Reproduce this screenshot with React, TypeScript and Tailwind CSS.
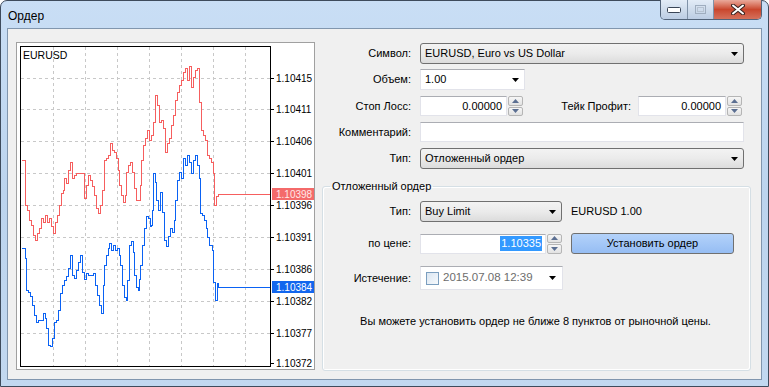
import React from 'react'

const red: [number, number][] = [
  [21, 160], [24, 160], [25, 205], [27, 210], [29, 220], [31, 225], [33, 235], [35, 240], [37, 233], [39, 228],
  [41, 218], [43, 222], [45, 215], [47, 222], [49, 218], [51, 226], [53, 233], [55, 222], [57, 215], [59, 205],
  [61, 193], [63, 190], [64, 178], [66, 183], [68, 170], [70, 162], [72, 178], [74, 175], [76, 173], [82, 173],
  [84, 198], [86, 185], [88, 175], [90, 180], [92, 186], [94, 195], [96, 208], [98, 213], [100, 205], [102, 190],
  [104, 160], [106, 158], [108, 155], [110, 143], [112, 150], [114, 152], [116, 158], [118, 170], [119, 185],
  [121, 195], [123, 202], [125, 195], [126, 172], [128, 165], [130, 162], [132, 172], [134, 188], [136, 200],
  [138, 200], [140, 185], [141, 160], [143, 145], [145, 138], [147, 130], [149, 140], [151, 135], [153, 122],
  [155, 95], [157, 105], [159, 122], [161, 120], [163, 128], [165, 152], [167, 143], [169, 138], [171, 125],
  [173, 115], [175, 100], [177, 92], [179, 85], [181, 80], [183, 72], [185, 68], [187, 80], [189, 66], [191, 87],
  [193, 77], [195, 70], [197, 68], [199, 102], [201, 130], [203, 135], [205, 140], [207, 155], [209, 158],
  [211, 162], [213, 173], [214, 205], [216, 196], [218, 194], [270, 194],
]

const blue: [number, number][] = [
  [21, 248], [24, 248], [25, 258], [26, 290], [28, 292], [30, 296], [32, 305], [34, 315], [36, 322], [38, 320],
  [41, 320], [43, 313], [45, 318], [46, 328], [48, 345], [50, 346], [52, 338], [54, 322], [56, 320], [58, 310],
  [60, 293], [62, 285], [64, 280], [66, 276], [68, 268], [70, 255], [72, 275], [74, 278], [76, 270], [78, 262],
  [80, 255], [82, 272], [84, 279], [86, 273], [88, 275], [93, 273], [95, 285], [97, 295], [99, 305], [101, 313],
  [103, 285], [104, 265], [106, 255], [108, 248], [109, 243], [111, 250], [113, 245], [115, 250], [117, 248],
  [119, 255], [120, 265], [122, 285], [124, 297], [126, 300], [127, 280], [129, 245], [131, 241], [133, 252],
  [134, 275], [136, 287], [138, 290], [139, 279], [140, 265], [142, 245], [144, 228], [146, 216], [148, 218],
  [150, 226], [151, 225], [152, 210], [153, 173], [155, 182], [156, 200], [158, 210], [160, 192], [162, 212],
  [164, 240], [166, 246], [168, 236], [170, 228], [172, 232], [174, 220], [175, 200], [177, 180], [179, 172],
  [181, 178], [183, 158], [185, 165], [187, 155], [189, 162], [191, 173], [193, 160], [195, 155], [197, 165],
  [199, 178], [200, 213], [202, 215], [204, 220], [206, 228], [207, 237], [209, 245], [211, 245], [212, 250],
  [213, 282], [215, 300], [217, 283], [218, 287], [270, 287],
]

const stepPath = (pts: [number, number][]) =>
  pts.map(([x, y], i) => (i === 0 ? `M${x + 0.5} ${y + 0.5}` : `H${x + 0.5}V${y + 0.5}`)).join('')

const levels = [
  { y: 78, t: '1.10415' },
  { y: 109, t: '1.10411' },
  { y: 141, t: '1.10406' },
  { y: 173, t: '1.10401' },
  { y: 205, t: '1.10396' },
  { y: 237, t: '1.10391' },
  { y: 269, t: '1.10386' },
  { y: 301, t: '1.10382' },
  { y: 333, t: '1.10377' },
  { y: 363, t: '1.10372' },
]
const vlines = [53, 85, 117, 149, 181, 213, 245]

function Chart() {
  return (
    <div className="w-[299px] h-[328px] border border-[#a0a0a0] bg-white shrink-0">
      <svg width="297" height="326" viewBox="17 43 297 326" className="block font-['Liberation_Sans',Arial,sans-serif]">
        {levels.slice(0, 9).map((l) => (
          <line key={l.y} x1="21" x2="270" y1={l.y + 0.5} y2={l.y + 0.5} stroke="#c8c8c8" strokeDasharray="3 3" />
        ))}
        {vlines.map((x) => (
          <line key={x} x1={x + 0.5} x2={x + 0.5} y1="47" y2="366" stroke="#c8c8c8" strokeDasharray="3 3" />
        ))}
        <path d={stepPath(red)} fill="none" stroke="#f65e5e" strokeWidth="1" shapeRendering="crispEdges" />
        <path d={stepPath(blue)} fill="none" stroke="#0a62f4" strokeWidth="1" shapeRendering="crispEdges" />
        <rect x="20.5" y="46.5" width="250" height="320" fill="none" stroke="#000" shapeRendering="crispEdges" />
        {levels.map((l) => (
          <g key={l.t}>
            <line x1="270" x2="274" y1={l.y + 0.5} y2={l.y + 0.5} stroke="#000" />
            <text x="276" y={l.y + 4} fontSize="10" fill="#000">{l.t}</text>
          </g>
        ))}
        <rect x="272" y="188" width="42" height="12" fill="#f46a6a" />
        <text x="276" y="198" fontSize="10" fill="#ffe8e8">1.10398</text>
        <rect x="272" y="281" width="42" height="12" fill="#1266ee" />
        <text x="276" y="291" fontSize="10" fill="#fff">1.10384</text>
        <text x="23" y="59" fontSize="10.5" fill="#000">EURUSD</text>
      </svg>
    </div>
  )
}

function Arrow() {
  return (
    <svg width="7" height="4" viewBox="0 0 7 4" className="block">
      <path d="M0 0H7L3.5 4Z" fill="#000" />
    </svg>
  )
}

function Combo({ w, text, arrowPad = 'pr-[5px]' }: { w: string; text: string; arrowPad?: string }) {
  return (
    <div
      className={`${w} h-[21px] flex items-center justify-between rounded-[3px] border border-[#707070] bg-gradient-to-b from-[#f3f3f3] via-[#ebebeb] to-[#dcdcdc] pl-[4px] ${arrowPad}`}
    >
      <span>{text}</span>
      <Arrow />
    </div>
  )
}

function Spin() {
  return (
    <div className="w-[15px] h-[20px] ml-[1px] flex flex-col gap-[1px]">
      {[0, 1].map((i) => (
        <div
          key={i}
          className="flex-1 flex items-center justify-center rounded-[2px] border border-[#b5b5b5] bg-gradient-to-b from-[#f6f6f6] to-[#e2e2e2]"
        >
          <svg width="7" height="4" viewBox="0 0 7 4" className="block">
            <path d={i === 0 ? 'M0 4H7L3.5 0Z' : 'M0 0H7L3.5 4Z'} fill="#5b6f92" />
          </svg>
        </div>
      ))}
    </div>
  )
}

const field = 'bg-white border border-[#e2e3ea] border-t-[#abadb3]'

function Row({ label, children, className = '' }: { label: string; children: React.ReactNode; className?: string }) {
  return (
    <div className={`flex items-center ${className}`}>
      <div className="w-[90px] text-right pr-[1px] shrink-0">{label}</div>
      <div className="ml-[8px] flex items-center">{children}</div>
    </div>
  )
}

function CaptionButtons() {
  return (
    <div className="flex h-[20px] -mt-[1px] rounded-b-[5px] border border-t-0 border-[#53647a] overflow-hidden">
      <div className="w-[27px] flex items-center justify-center bg-gradient-to-b from-[#e3ecf7] via-[#cfdcec] to-[#bccde4] border-r border-[#8092a8]">
        <svg width="14" height="6" viewBox="0 0 14 6">
          <rect x="0.5" y="0.5" width="13" height="5" rx="1" fill="#fff" stroke="#3a4556" />
        </svg>
      </div>
      <div className="w-[26px] flex items-center justify-center bg-gradient-to-b from-[#e3ecf7] via-[#cfdcec] to-[#bccde4] border-r border-[#8092a8]">
        <svg width="11" height="9" viewBox="0 0 11 9">
          <rect x="0.5" y="0.5" width="10" height="8" fill="none" stroke="#9fadbf" />
          <rect x="2.5" y="2.5" width="6" height="4" fill="none" stroke="#b6c2d1" />
        </svg>
      </div>
      <div className="w-[47px] flex items-center justify-center bg-gradient-to-b from-[#e9a99b] via-[#c9462d] to-[#d5705b]">
        <svg width="14" height="11" viewBox="0 0 14 11">
          <path d="M2 1.5L12 9.5M12 1.5L2 9.5" stroke="#3b2320" strokeWidth="4" strokeLinecap="round" />
          <path d="M2 1.5L12 9.5M12 1.5L2 9.5" stroke="#fff" strokeWidth="2" strokeLinecap="round" />
        </svg>
      </div>
    </div>
  )
}

export default function App() {
  return (
    <div className="w-[769px] h-[387px] bg-white font-['Liberation_Sans',Arial,sans-serif] text-[11px] text-black">
      <div className="w-[769px] h-[387px] flex flex-col rounded-t-[7px] border border-[#3e4b5c] bg-gradient-to-b from-[#c9def5] via-[#bcd4ee] to-[#c2d8f0]">
        <div className="h-[27px] flex items-start justify-between pl-[7px] pr-[6px] shrink-0">
          <div className="mt-[7px] text-[12px] leading-[16px]">Ордер</div>
          <CaptionButtons />
        </div>
        <div className="mx-[6px] h-[352px] border border-[#8196ae] bg-[#f0f0f0] flex pl-[8px] pt-[13px]">
          <Chart />
          <div className="ml-[7px] w-[429px] flex flex-col">
            <Row label="Символ:" className="mt-[1px]">
              <Combo w="w-[324px] h-[20px]" text="EURUSD, Euro vs US Dollar" arrowPad="pr-[5px]" />
            </Row>
            <Row label="Объем:" className="mt-[5px]">
              <div className={`w-[105px] h-[21px] flex items-center justify-between pl-[4px] pr-[5px] ${field}`}>
                <span>1.00</span>
                <Arrow />
              </div>
            </Row>
            <div className="flex items-center mt-[6px]">
              <div className="w-[90px] text-right pr-[1px] shrink-0">Стоп Лосс:</div>
              <div className={`ml-[8px] w-[87px] h-[20px] flex items-center justify-end pr-[4px] ${field}`}>0.00000</div>
              <Spin />
              <div className="ml-[36px] w-[72px] text-right">Тейк Профит:</div>
              <div className={`ml-[7px] w-[88px] h-[20px] flex items-center justify-end pr-[4px] ${field}`}>0.00000</div>
              <Spin />
            </div>
            <Row label="Комментарий:" className="mt-[6px]">
              <div className={`w-[324px] h-[20px] ${field}`} />
            </Row>
            <Row label="Тип:" className="mt-[6px]">
              <Combo w="w-[324px]" text="Отложенный ордер" />
            </Row>
            <fieldset className="mt-[10px] h-[192px] rounded-[3px] border border-[#d5dfe5] shadow-[inset_1px_1px_0_#fff,inset_-1px_-1px_0_#fff]">
              <legend className="ml-[7px] px-[2px] leading-[14px]">Отложенный ордер</legend>
              <div className="flex flex-col mt-[8px]">
                <div className="flex items-center">
                  <div className="w-[89px] text-right pr-[1px] shrink-0">Тип:</div>
                  <div className="ml-[8px]">
                    <Combo w="w-[142px]" text="Buy Limit" />
                  </div>
                  <div className="ml-[9px]">EURUSD 1.00</div>
                </div>
                <div className="flex items-center mt-[11px]">
                  <div className="w-[89px] text-right pr-[1px] shrink-0">по цене:</div>
                  <div className={`ml-[8px] w-[126px] h-[20px] flex items-center justify-end pr-[3px] ${field}`}>
                    <span className="bg-[#3399ff] text-white px-[1px] leading-[15px]">1.10335</span>
                  </div>
                  <Spin />
                  <div className="ml-[9px] w-[163px] h-[21px] flex items-center justify-center rounded-[3px] border border-[#707070] bg-gradient-to-b from-[#b3d2fa] to-[#96bdf3] text-[11px]">
                    Установить ордер
                  </div>
                </div>
                <div className="flex items-center mt-[12px]">
                  <div className="w-[89px] text-right pr-[1px] shrink-0">Истечение:</div>
                  <div className={`ml-[8px] w-[143px] h-[24px] flex items-center pl-[5px] pr-[6px] ${field}`}>
                    <div className="w-[13px] h-[13px] border border-[#7b9ebf] bg-gradient-to-br from-[#dbe6f2] to-[#f6f9fc] shrink-0" />
                    <div className="ml-[4px] w-[90px] overflow-hidden whitespace-nowrap text-[11.5px] text-[#6d6d6d]">
                      2015.07.08 12:39
                    </div>
                    <div className="ml-auto">
                      <Arrow />
                    </div>
                  </div>
                </div>
                <div className="mt-[23px] text-center text-[11px] pr-[2px]">
                  Вы можете установить ордер не ближе 8 пунктов от рыночной цены.
                </div>
              </div>
            </fieldset>
          </div>
        </div>
      </div>
    </div>
  )
}
